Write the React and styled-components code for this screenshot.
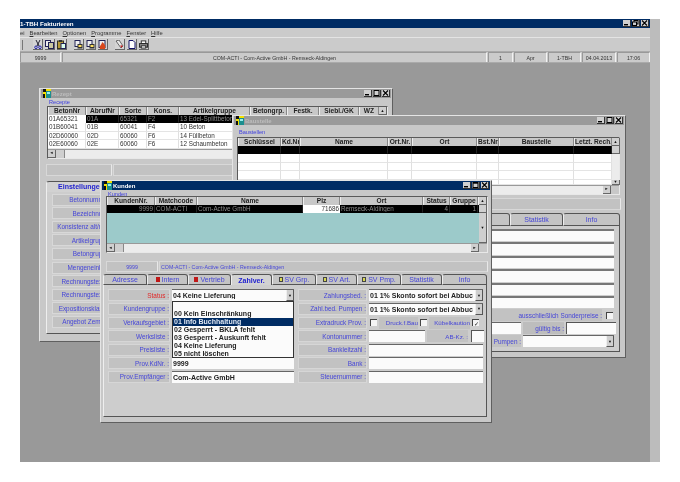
import React from 'react';
import styled, { createGlobalStyle } from 'styled-components';

const GlobalStyle = createGlobalStyle`
  html, body {
    margin: 0;
    background: #fff;
    font-family: "Liberation Sans", Arial, sans-serif;
    font-size: 8px;
  }
`;

const WindowIcon = () => (
  <IconSvg viewBox="0 0 8 9">
    <rect width="8" height="9" fill="#f4e000" />
    <rect x="0" y="0" width="3" height="3" fill="#111" />
    <rect x="3" y="2" width="5" height="7" fill="#1c8f8f" />
    <rect x="4" y="3" width="3" height="2" fill="#9ee" />
    <rect x="0" y="5" width="2" height="4" fill="#111" />
  </IconSvg>
);

const CaptionButtons = ({ active }) => (
  <Caption>
    <CaptionButton>
      <svg viewBox="0 0 7 6" width="7" height="6"><rect x="1" y="4" width="4" height="1.4" fill="#000" /></svg>
    </CaptionButton>
    <CaptionButton>
      <svg viewBox="0 0 7 6" width="7" height="6">
        <rect x="1" y="0.5" width="5" height="5" fill="none" stroke="#000" />
        {active && <rect x="1" y="0.5" width="5" height="1.2" fill="#000" />}
      </svg>
    </CaptionButton>
    <CaptionButton>
      <svg viewBox="0 0 7 6" width="7" height="6"><path d="M1 0.5 L6 5.5 M6 0.5 L1 5.5" stroke="#000" strokeWidth="1.1" /></svg>
    </CaptionButton>
  </Caption>
);

const ToolIcon = ({ kind }) => {
  if (kind === 'cut') {
    return (
      <svg viewBox="0 0 8 9" width="8" height="9">
        <path d="M2 0 L5 6 M6 0 L3 6" stroke="#223" strokeWidth="1" fill="none" />
        <circle cx="2" cy="7.3" r="1.3" fill="none" stroke="#22a" />
        <circle cx="6" cy="7.3" r="1.3" fill="none" stroke="#22a" />
      </svg>
    );
  }
  if (kind === 'copy') {
    return (
      <svg viewBox="0 0 9 9" width="9" height="9">
        <rect x="0.5" y="0.5" width="5" height="6" fill="#eee" stroke="#225" />
        <rect x="3.5" y="2.5" width="5" height="6" fill="#c9c8a0" stroke="#225" />
      </svg>
    );
  }
  if (kind === 'paste') {
    return (
      <svg viewBox="0 0 9 9" width="9" height="9">
        <rect x="0.5" y="1" width="6" height="7.5" fill="#b59a3a" stroke="#332" />
        <rect x="2" y="0" width="3" height="2" fill="#333" />
        <rect x="4" y="3.5" width="4.5" height="5" fill="#dfe" stroke="#225" />
      </svg>
    );
  }
  if (kind === 'find') {
    return (
      <svg viewBox="0 0 9 9" width="9" height="9">
        <rect x="1" y="0.5" width="5" height="6" fill="#eee" stroke="#225" />
        <rect x="3.5" y="4" width="5" height="4.5" fill="#333" />
        <rect x="4.5" y="5" width="3" height="2" fill="#ffe060" />
      </svg>
    );
  }
  if (kind === 'fire') {
    return (
      <svg viewBox="0 0 9 9" width="9" height="9">
        <rect x="1" y="0.5" width="6" height="7" fill="#eee" stroke="#225" />
        <path d="M2 9 C1 5 4 5 4 2 C7 4 8 6 7 9 Z" fill="#d9481c" />
      </svg>
    );
  }
  if (kind === 'torch') {
    return (
      <svg viewBox="0 0 9 9" width="9" height="9">
        <path d="M1 1 L4 0 L8 6 L6 8 Z" fill="#e8e8e8" stroke="#333" strokeWidth="0.7" />
        <path d="M5.5 5 L8 6 L6 8 Z" fill="#c22" />
      </svg>
    );
  }
  if (kind === 'page') {
    return (
      <svg viewBox="0 0 8 9" width="8" height="9">
        <path d="M1 0.5 H5 L7 2.5 V8.5 H1 Z" fill="#fff" stroke="#116" />
      </svg>
    );
  }
  return (
    <svg viewBox="0 0 10 9" width="10" height="9">
      <rect x="2.5" y="0.5" width="5" height="3" fill="#fff" stroke="#222" />
      <rect x="0.5" y="3.5" width="9" height="4" fill="#888" stroke="#222" />
      <rect x="2.5" y="6" width="5" height="2.5" fill="#fff" stroke="#222" />
    </svg>
  );
};

const ReceptCols = '38px 33px 28px 32px 71px 37px 32px 40px 20px 9px';
const BaustelleCols = '43px 19px 88px 24px 65px 22px 75px 38px 7px';
const KundenCols = '48px 42px 106px 37px 83px 27px 28px 1px 8px';

const receptHead = ['BetonNr', 'AbrufNr', 'Sorte', 'Kons.', 'Artikelgruppe', 'Betongrp.', 'Festk.', 'Siebl./GK', 'WZ'];
const receptRows = [
  ['01B60041', '01B', '60041', 'F4', '10 Beton'],
  ['02D60060', '02D', '60060', 'F6', '14 Füllbeton'],
  ['02E60060', '02E', '60060', 'F6', '12 Schaumbeton'],
];
const baustelleHead = ['Schlüssel', 'Kd.Nr.', 'Name', 'Ort.Nr.', 'Ort', 'Bst.Nr.', 'Baustelle', 'Letzt. Rech.'];
const kundenHead = ['KundenNr.', 'Matchcode', 'Name', 'Plz', 'Ort', 'Status', 'Gruppe', 'G'];
const statusOptions = [
  '00 Kein Einschränkung',
  '01 Info Buchhaltung',
  '02 Gesperrt - BKLA fehlt',
  '03 Gesperrt - Auskunft fehlt',
  '04 Keine Lieferung',
  '05 nicht löschen',
];
const leftLabels = ['Betonnummer', 'Bezeichnung', 'Konsistenz alt/neu', 'Artikelgruppe', 'Betongruppe', 'Mengeneinheit', 'Rechnungstext 1', 'Rechnungstext 2', 'Expositionsklasse', 'Angebot Zement'];
const kundenTabs = [
  { name: 'Adresse', w: 44 },
  { name: 'Intern', w: 41, mark: 'red' },
  { name: 'Vertrieb', w: 43, mark: 'red' },
  { name: 'Zahlver.', w: 41, active: true },
  { name: 'SV Grp.', w: 44, mark: 'doc' },
  { name: 'SV Art.', w: 41, mark: 'doc' },
  { name: 'SV Pmp.', w: 44, mark: 'doc' },
  { name: 'Statistik', w: 41 },
  { name: 'Info', w: 45 },
];

const HeaderRow = ({ cols, names }) => (
  <GridRow $cols={cols}>
    {names.map((n) => (
      <HeadCell key={n}>{n}</HeadCell>
    ))}
    <ArrowBox>▲</ArrowBox>
  </GridRow>
);

const HScroll = () => (
  <HBar>
    <ArrowBox>◄</ArrowBox>
    <Thumb />
    <Track />
    <ArrowBox>►</ArrowBox>
    <Corner />
  </HBar>
);

const Field = ({ label, red, w, children }) => (
  <FormRow>
    <FieldLabel $red={red} $w={w}>{label} :</FieldLabel>
    {children}
  </FormRow>
);

const SelectBox = ({ value }) => (
  <Select>
    <span>{value}</span>
    <SelectArrow>▼</SelectArrow>
  </Select>
);

const App = () => (
  <Page>
    <GlobalStyle />
    <AppFrame>
      <MainTitle>
        <span>1-TBH Fakturieren</span>
        <Caption>
          <CaptionButton>
            <svg viewBox="0 0 7 6" width="7" height="6"><rect x="1" y="4" width="4" height="1.4" fill="#000" /></svg>
          </CaptionButton>
          <CaptionButton>
            <svg viewBox="0 0 7 6" width="7" height="6"><rect x="2" y="0.5" width="4" height="3.5" fill="none" stroke="#000" /><rect x="0.5" y="2" width="4" height="3.5" fill="#ccc" stroke="#000" /></svg>
          </CaptionButton>
          <CaptionButton>
            <svg viewBox="0 0 7 6" width="7" height="6"><path d="M1 0.5 L6 5.5 M6 0.5 L1 5.5" stroke="#000" strokeWidth="1.1" /></svg>
          </CaptionButton>
        </Caption>
      </MainTitle>
      <MenuBar>
        <MenuItem>ei</MenuItem>
        <MenuItem><u>B</u>earbeiten</MenuItem>
        <MenuItem><u>O</u>ptionen</MenuItem>
        <MenuItem><u>P</u>rogramme</MenuItem>
        <MenuItem><u>F</u>enster</MenuItem>
        <MenuItem><u>H</u>ilfe</MenuItem>
      </MenuBar>
      <ToolBar>
        <Grip />
        <ToolGroup>
          {['cut', 'copy', 'paste'].map((k) => <ToolButton key={k}><ToolIcon kind={k} /></ToolButton>)}
        </ToolGroup>
        <ToolGroup>
          {['find', 'find', 'fire'].map((k, i) => <ToolButton key={i}><ToolIcon kind={k} /></ToolButton>)}
        </ToolGroup>
        <ToolGroup>
          {['torch', 'page', 'print'].map((k) => <ToolButton key={k}><ToolIcon kind={k} /></ToolButton>)}
        </ToolGroup>
      </ToolBar>
      <StatusStrip>
        <StatusCell $w={41}>9999</StatusCell>
        <StatusCell $grow>COM-ACTI - Com-Active GmbH - Remseck-Aldingen</StatusCell>
        <StatusCell $w={25}>1</StatusCell>
        <StatusCell $w={33}>Apr</StatusCell>
        <StatusCell $w={33}>1-TBH</StatusCell>
        <StatusCell $w={34}>04.04.2013</StatusCell>
        <StatusCell $w={33}>17:06</StatusCell>
      </StatusStrip>

      <Workspace>
        <Window $x={19} $y={25} $w={354} $h={254}>
          <WinTitle>
            <TitleLeft><WindowIcon />Rezept</TitleLeft>
            <CaptionButtons />
          </WinTitle>
          <Group $mt={7} $ml={6} $mr={3}>
            <GroupLabel $top={-6}>Recepte</GroupLabel>
            <Grid>
              <HeaderRow cols={ReceptCols} names={receptHead} />
              <GridRow $cols={ReceptCols} $selected>
                <FocusCell>01A65321</FocusCell>
                <Cell $dark>01A</Cell>
                <Cell $dark>65321</Cell>
                <Cell $dark>F2</Cell>
                <Cell $dark $wide={2}>13 Edel-Splittbeton</Cell>
              </GridRow>
              {receptRows.map((r) => (
                <GridRow key={r[0]} $cols={ReceptCols}>
                  {r.map((c) => <Cell key={c}>{c}</Cell>)}
                </GridRow>
              ))}
              <HScroll />
            </Grid>
          </Group>
          <InfoStrip $mt={5} $ml={5} $mr={3} $h={12}>
            <InfoBox $w={66} />
            <InfoBox $grow />
          </InfoStrip>
          <TabArea $mt={5} $ml={5} $mr={3} $mb={6}>
            <Tab $active $w={70} $h={11}>Einstellungen</Tab>
            <TabPanel>
              <LabelStack>
                {leftLabels.map((l) => <StackLabel key={l}>{l} :</StackLabel>)}
              </LabelStack>
            </TabPanel>
          </TabArea>
        </Window>

        <Window $x={212} $y={52} $w={394} $h={243}>
          <WinTitle>
            <TitleLeft><WindowIcon />Baustelle</TitleLeft>
            <CaptionButtons />
          </WinTitle>
          <Group $mt={11} $ml={3} $mr={4}>
            <GroupLabel $top={-7}>Baustellen</GroupLabel>
            <Grid>
              <HeaderRow cols={BaustelleCols} names={baustelleHead} />
              <GridRow $cols={BaustelleCols} $selected>
                {baustelleHead.map((h) => <Cell key={h} $dark />)}
                <ArrowBox />
              </GridRow>
              {[0, 1, 2].map((r) => (
                <GridRow key={r} $cols={BaustelleCols}>
                  {baustelleHead.map((h) => <Cell key={h} />)}
                  <ScrollSide />
                </GridRow>
              ))}
              <GridRow $cols={BaustelleCols} $h={5.4}>
                {baustelleHead.map((h) => <Cell key={h} />)}
                <ArrowBox>▼</ArrowBox>
              </GridRow>
              <HScroll />
            </Grid>
          </Group>
          <InfoStrip $mt={3} $ml={3} $mr={3} $h={12}><InfoBox $grow /></InfoStrip>
          <TabArea $mt={3} $ml={3} $mr={4} $mb={4}>
            <TabRow $end>
              <Tab $w={70} $h={13}>SV Pmp.</Tab>
              <Tab $w={53} $h={13}>Statistik</Tab>
              <Tab $w={57} $h={13}>Info</Tab>
            </TabRow>
            <BaustellePanel>
              {[0, 1, 2, 3, 4, 5].map((r) => <BlankLine key={r} />)}
              <SonderRow>
                <SonderLabel>ausschließlich Sonderpreise :</SonderLabel>
                <Check />
              </SonderRow>
              <DatesRow>
                <WideInput />
                <DateLabel>gültig bis :</DateLabel>
                <DateInput />
              </DatesRow>
              <PumpRow>
                <PumpLabel>Pumpen :</PumpLabel>
                <SelectBox value="" />
              </PumpRow>
            </BaustellePanel>
          </TabArea>
        </Window>

        <Window $x={80} $y={117} $w={392} $h={243}>
          <WinTitle $active>
            <TitleLeft><WindowIcon />Kunden</TitleLeft>
            <CaptionButtons active />
          </WinTitle>
          <Group $mt={5} $ml={4} $mr={2}>
            <GroupLabel $top={-4}>Kunden</GroupLabel>
            <Grid>
              <HeaderRow cols={KundenCols} names={kundenHead} />
              <GridRow $cols={KundenCols} $selected>
                <Cell $dark $right>9999</Cell>
                <Cell $dark>COM-ACTI</Cell>
                <Cell $dark>Com-Active GmbH</Cell>
                <FocusCell $right>71686</FocusCell>
                <Cell $dark>Remseck-Aldingen</Cell>
                <Cell $dark $right>4</Cell>
                <Cell $dark $right>1</Cell>
                <Cell $dark />
                <ArrowBox />
              </GridRow>
              <TealArea>
                <ScrollColumn>
                  <ScrollGap />
                  <ArrowBox>▼</ArrowBox>
                </ScrollColumn>
              </TealArea>
              <HScroll />
            </Grid>
          </Group>
          <InfoStrip $mt={8} $ml={4} $mr={2} $h={11}>
            <InfoBox $w={52} $blue>9999</InfoBox>
            <InfoBox $grow $blue $left>COM-ACTI - Com-Active GmbH - Remseck-Aldingen</InfoBox>
          </InfoStrip>
          <TabArea $mt={2} $ml={1} $mr={3} $mb={4}>
            <TabRow>
              {kundenTabs.map((t) => (
                <Tab key={t.name} $w={t.w} $h={11} $active={t.active}>
                  {t.mark === 'red' && <RedMark />}
                  {t.mark === 'doc' && <DocMark />}
                  {t.name}
                </Tab>
              ))}
            </TabRow>
            <KundenPanel>
              <FormColumn>
                <DropAnchor>
                  <Field label="Status" red w={62}>
                    <SelectBox value="04 Keine Lieferung" />
                  </Field>
                  <DropList>
                    <DropItem />
                    {statusOptions.map((o, i) => (
                      <DropItem key={o} $selected={i === 1}>{o}</DropItem>
                    ))}
                  </DropList>
                </DropAnchor>
                <Field label="Kundengruppe" w={62}><TextInput /></Field>
                <Field label="Verkaufsgebiet" w={62}><TextInput /></Field>
                <Field label="Werksliste" w={62}><TextInput /></Field>
                <Field label="Preisliste" w={62}><TextInput /></Field>
                <Field label="Prov.KdNr." w={62}><TextInput>9999</TextInput></Field>
                <Field label="Prov.Empfänger" w={62}><TextInput>Com-Active GmbH</TextInput></Field>
              </FormColumn>
              <FormColumn>
                <Field label="Zahlungsbed." w={69}><SelectBox value="01 1% Skonto sofort bei Abbuc" /></Field>
                <Field label="Zahl.bed. Pumpen" w={69}><SelectBox value="01 1% Skonto sofort bei Abbuc" /></Field>
                <Field label="Extradruck Prov." w={69}>
                  <CheckRow>
                    <Check />
                    <MiniLabel $w={39}>Druck.f.Bau</MiniLabel>
                    <Check />
                    <MiniLabel $w={41}>Kübelkaution</MiniLabel>
                    <Check $checked>✓</Check>
                  </CheckRow>
                </Field>
                <Field label="Kontonummer" w={69}>
                  <CheckRow>
                    <ShortInput />
                    <MiniLabel $w={41}>AB-Kz. :</MiniLabel>
                    <TinyInput />
                  </CheckRow>
                </Field>
                <Field label="Bankleitzahl" w={69}><TextInput /></Field>
                <Field label="Bank" w={69}><TextInput /></Field>
                <Field label="Steuernummer" w={69}><TextInput /></Field>
              </FormColumn>
            </KundenPanel>
          </TabArea>
        </Window>
      </Workspace>
    </AppFrame>
  </Page>
);

export default App;

const Page = styled.div`
  width: 680px;
  height: 482px;
  padding: 19px 0 0 20px;
  box-sizing: border-box;
  overflow: hidden;
  background: #fff;
`;

const AppFrame = styled.div`
  width: 640px;
  height: 443px;
  box-sizing: border-box;
  border-right: 10px solid #bcbcbc;
  display: flex;
  flex-direction: column;
  background: #cbcbcb;
  color: #222;
  filter: blur(0.3px);
`;

const MainTitle = styled.div`
  height: 9px;
  flex: none;
  display: flex;
  align-items: center;
  justify-content: space-between;
  padding-right: 1px;
  background: #002c64;
  color: #fff;
  font-size: 6.2px;
  font-weight: 700;
`;

const Caption = styled.div`
  display: flex;
  gap: 1px;
  align-items: center;
`;

const CaptionButton = styled.div`
  width: 7px;
  height: 6px;
  display: flex;
  background: #d0d0d0;
  border-right: 1px solid #333;
  border-bottom: 1px solid #333;
  overflow: hidden;
`;

const MenuBar = styled.div`
  height: 10px;
  flex: none;
  box-sizing: border-box;
  display: flex;
  align-items: center;
  gap: 5px;
  color: #333;
  font-size: 5.8px;
  border-bottom: 1px solid #e4e4e4;
`;

const MenuItem = styled.span`
  u { text-decoration: underline; }
`;

const ToolBar = styled.div`
  height: 14px;
  flex: none;
  box-sizing: border-box;
  display: flex;
  align-items: center;
  gap: 7px;
  border-bottom: 1px solid #aaa;
`;

const Grip = styled.div`
  width: 2px;
  height: 10px;
  border-right: 1px solid #777;
  margin-right: 3px;
`;

const ToolGroup = styled.div`
  display: flex;
  gap: 2px;
`;

const ToolButton = styled.div`
  width: 9px;
  height: 10px;
  display: flex;
  align-items: center;
  justify-content: center;
  border-right: 1px solid #666;
  border-bottom: 1px solid #666;
  background: #d4d4d4;
`;

const StatusStrip = styled.div`
  height: 11px;
  flex: none;
  display: flex;
  gap: 1px;
  border-bottom: 1px solid #aaa;
  box-sizing: border-box;
`;

const StatusCell = styled.div`
  flex: ${(p) => (p.$grow ? '1' : 'none')};
  width: ${(p) => (p.$w ? `${p.$w}px` : 'auto')};
  box-sizing: border-box;
  display: flex;
  align-items: center;
  justify-content: center;
  color: #333;
  font-size: 5.25px;
  border-top: 1px solid #999;
  border-right: 1px solid #f2f2f2;
  border-left: 1px solid #999;
`;

const Workspace = styled.div`
  flex: 1;
  position: relative;
  background: #999;
`;

const Window = styled.div`
  position: absolute;
  left: ${(p) => p.$x}px;
  top: ${(p) => p.$y}px;
  width: ${(p) => p.$w}px;
  height: ${(p) => p.$h}px;
  box-sizing: border-box;
  overflow: hidden;
  display: flex;
  flex-direction: column;
  padding: 0 1px 1px;
  background: #c8c8c8;
  border-top: 1px solid #e4e4e4;
  border-left: 1px solid #e4e4e4;
  border-right: 1px solid #5f5f5f;
  border-bottom: 1px solid #5f5f5f;
`;

const WinTitle = styled.div`
  height: 9px;
  flex: none;
  display: flex;
  align-items: center;
  justify-content: space-between;
  padding: 0 1px 0 2px;
  background: ${(p) => (p.$active ? '#002c64' : '#9a9a9a')};
  color: ${(p) => (p.$active ? '#fff' : '#bdbdbd')};
  font-size: 6px;
  font-weight: 700;
`;

const TitleLeft = styled.div`
  display: flex;
  align-items: center;
  gap: 1px;
`;

const IconSvg = styled.svg`
  width: 8px;
  height: 9px;
`;

const Group = styled.div`
  position: relative;
  flex: none;
  margin: ${(p) => p.$mt}px ${(p) => p.$mr}px 0 ${(p) => p.$ml}px;
`;

const GroupLabel = styled.span`
  position: absolute;
  left: 2px;
  top: ${(p) => p.$top}px;
  color: #3c3ce0;
  font-size: 5.6px;
  line-height: 6px;
`;

const Grid = styled.div`
  margin-top: 1px;
  border-top: 1px solid #5a5a5a;
  border-left: 1px solid #5a5a5a;
  border-right: 1px solid #e8e8e8;
  border-bottom: 1px solid #e8e8e8;
  background: #fff;
`;

const GridRow = styled.div`
  display: grid;
  grid-template-columns: ${(p) => p.$cols};
  height: ${(p) => p.$h || 8.4}px;
  background: ${(p) => (p.$selected ? '#000' : '#fff')};
  &:first-child { height: 8px; }
`;

const HeadCell = styled.div`
  background: #c8c8c8;
  color: #222;
  font-size: 6.6px;
  font-weight: 700;
  line-height: 8px;
  text-align: center;
  white-space: nowrap;
  overflow: hidden;
  border-right: 1px solid #888;
  border-left: 1px solid #eee;
  box-sizing: border-box;
`;

const Cell = styled.div`
  box-sizing: border-box;
  padding: 0 1px;
  font-size: 6.3px;
  line-height: 8px;
  white-space: nowrap;
  overflow: hidden;
  text-align: ${(p) => (p.$right ? 'right' : 'left')};
  color: ${(p) => (p.$dark ? '#8c8c8c' : '#333')};
  background: ${(p) => (p.$dark ? '#000' : '#fff')};
  border-right: 1px solid ${(p) => (p.$dark ? '#222' : '#e0e0e0')};
  border-bottom: 1px solid ${(p) => (p.$dark ? '#000' : '#e4e4e4')};
  grid-column: span ${(p) => p.$wide || 1};
`;

const FocusCell = styled(Cell)`
  background: #fff;
  color: #333;
  border: none;
`;

const ArrowBox = styled.div`
  flex: none;
  width: 8px;
  height: 100%;
  box-sizing: border-box;
  display: flex;
  align-items: center;
  justify-content: center;
  background: #cfcfcf;
  color: #111;
  font-size: 4px;
  line-height: 1;
  border-right: 1px solid #666;
  border-bottom: 1px solid #666;
`;

const ScrollSide = styled.div`
  background: #ececec;
`;

const HBar = styled.div`
  height: 8px;
  display: flex;
  background: #ececec;
  border-top: 1px solid #999;
`;

const Thumb = styled.div`
  width: 8px;
  background: #cfcfcf;
  border-right: 1px solid #888;
`;

const Track = styled.div`
  flex: 1;
`;

const Corner = styled.div`
  width: 8px;
  background: #c8c8c8;
`;

const InfoStrip = styled.div`
  flex: none;
  display: flex;
  gap: 1px;
  height: ${(p) => p.$h}px;
  margin: ${(p) => p.$mt}px ${(p) => p.$mr}px 0 ${(p) => p.$ml}px;
`;

const InfoBox = styled.div`
  flex: ${(p) => (p.$grow ? '1' : 'none')};
  width: ${(p) => (p.$w ? `${p.$w}px` : 'auto')};
  display: flex;
  align-items: center;
  justify-content: ${(p) => (p.$left ? 'flex-start' : 'center')};
  padding-left: ${(p) => (p.$left ? '1px' : '0')};
  box-sizing: border-box;
  background: #c2c2c2;
  color: #4646d8;
  font-size: 5.25px;
  border: 1px solid #d8d8d8;
  border-right-color: #e8e8e8;
`;

const TabArea = styled.div`
  flex: 1;
  min-height: 0;
  display: flex;
  flex-direction: column;
  margin: ${(p) => p.$mt}px ${(p) => p.$mr}px ${(p) => p.$mb}px ${(p) => p.$ml}px;
`;

const TabRow = styled.div`
  flex: none;
  display: flex;
  justify-content: ${(p) => (p.$end ? 'flex-end' : 'flex-start')};
`;

const Tab = styled.div`
  width: ${(p) => p.$w}px;
  flex: none;
  box-sizing: border-box;
  height: ${(p) => p.$h}px;
  display: flex;
  align-items: center;
  justify-content: center;
  gap: 1px;
  color: ${(p) => (p.$active ? '#2222d0' : '#4646d8')};
  font-size: 7px;
  font-weight: ${(p) => (p.$active ? 700 : 400)};
  background: ${(p) => (p.$active ? '#d2d2d2' : '#c4c4c4')};
  border: 1px solid #555;
  border-bottom: ${(p) => (p.$active ? 'none' : '1px solid #555')};
  border-left-color: #eee;
  border-top-left-radius: 3px;
  border-top-right-radius: 3px;
  white-space: nowrap;
  overflow: hidden;
`;

const RedMark = styled.i`
  width: 4px;
  height: 5px;
  margin-right: 1px;
  background: #c01818;
`;

const DocMark = styled.i`
  width: 4px;
  height: 5px;
  margin-right: 1px;
  background: #d8d850;
  border: 1px solid #444;
  box-sizing: border-box;
`;

const TabPanel = styled.div`
  flex: 1;
  min-height: 0;
  box-sizing: border-box;
  padding: 2px 5px 3px 5px;
  border-left: 1px solid #eee;
  border-right: 1px solid #555;
  border-bottom: 1px solid #555;
  background: #cdcdcd;
  display: flex;
  flex-direction: column;
  gap: 1px;
`;

const BaustellePanel = styled(TabPanel)`
  padding-top: 3px;
`;

const KundenPanel = styled(TabPanel)`
  display: grid;
  grid-template-columns: 186px 185px;
  align-content: start;
  gap: 4px;
  padding: 4px 3px 3px 4px;
`;

const LabelStack = styled.div`
  display: flex;
  flex-direction: column;
  gap: 1.6px;
`;

const StackLabel = styled.div`
  height: 12px;
  width: 62px;
  box-sizing: border-box;
  display: flex;
  align-items: center;
  justify-content: flex-end;
  background: #c2c2c2;
  color: #4646d8;
  font-size: 6.4px;
  white-space: nowrap;
  border: 1px solid #d8d8d8;
`;

const BlankLine = styled.div`
  height: 12.4px;
  margin-left: 200px;
  box-sizing: border-box;
  background: #fbfbfb;
  border-top: 2px solid #777;
`;

const SonderRow = styled.div`
  display: flex;
  align-items: center;
  gap: 3px;
  height: 12px;
  margin-left: 200px;
`;

const SonderLabel = styled.div`
  flex: 1;
  height: 100%;
  display: flex;
  align-items: center;
  justify-content: flex-end;
  color: #4646d8;
  font-size: 6.4px;
  background: #c2c2c2;
`;

const DatesRow = styled.div`
  display: flex;
  height: 12px;
  gap: 2px;
  margin-left: 200px;
  margin-right: -2px;
`;

const WideInput = styled.div`
  flex: 1;
  background: #fbfbfb;
  border-top: 1px solid #666;
`;

const DateLabel = styled.div`
  width: 41px;
  display: flex;
  align-items: center;
  justify-content: flex-end;
  background: #bdbdbd;
  color: #4646d8;
  font-size: 6.4px;
`;

const DateInput = styled.div`
  width: 50px;
  box-sizing: border-box;
  background: #fbfbfb;
  border-top: 1px solid #555;
  border-left: 1px solid #555;
`;

const PumpRow = styled.div`
  display: flex;
  height: 12px;
  gap: 2px;
  margin-left: 200px;
`;

const PumpLabel = styled.div`
  width: 78px;
  flex: none;
  display: flex;
  align-items: center;
  justify-content: flex-end;
  color: #4646d8;
  font-size: 6.4px;
  background: #c2c2c2;
`;

const FormColumn = styled.div`
  display: flex;
  flex-direction: column;
  gap: 1.6px;
`;

const FormRow = styled.div`
  height: 12px;
  display: flex;
  gap: 2px;
`;

const FieldLabel = styled.div`
  width: ${(p) => p.$w}px;
  flex: none;
  box-sizing: border-box;
  display: flex;
  align-items: center;
  justify-content: flex-end;
  background: #c2c2c2;
  color: ${(p) => (p.$red ? '#e02828' : '#4646d8')};
  font-size: 6.4px;
  white-space: nowrap;
  border: 1px solid #d6d6d6;
`;

const TextInput = styled.div`
  flex: 1;
  min-width: 0;
  box-sizing: border-box;
  padding-left: 1px;
  display: flex;
  align-items: center;
  background: #fbfbfb;
  color: #222;
  font-size: 7px;
  font-weight: 700;
  border-top: 1px solid #666;
  white-space: nowrap;
`;

const Select = styled(TextInput)`
  justify-content: space-between;
  overflow: hidden;
  span { overflow: hidden; min-width: 0; }
`;

const SelectArrow = styled.div`
  flex: none;
  width: 8px;
  height: 100%;
  display: flex;
  align-items: center;
  justify-content: center;
  background: #cfcfcf;
  color: #111;
  font-size: 4px;
  border-left: 1px solid #eee;
  border-right: 1px solid #555;
  border-bottom: 1px solid #555;
  box-sizing: border-box;
`;

const DropAnchor = styled.div`
  position: relative;
`;

const DropList = styled.div`
  position: absolute;
  left: 64px;
  top: 12px;
  z-index: 5;
  width: 122px;
  height: 57px;
  box-sizing: border-box;
  overflow: hidden;
  background: #fbfbfb;
  border: 1px solid #333;
`;

const DropItem = styled.div`
  height: 8px;
  line-height: 8px;
  padding-left: 1px;
  font-size: 7px;
  font-weight: 700;
  white-space: nowrap;
  color: ${(p) => (p.$selected ? '#dfe8f4' : '#222')};
  background: ${(p) => (p.$selected ? '#002c64' : 'transparent')};
`;

const CheckRow = styled.div`
  flex: 1;
  display: flex;
  align-items: stretch;
  gap: 1px;
`;

const Check = styled.div`
  flex: none;
  width: 7px;
  height: 7px;
  align-self: center;
  margin: 0 1px;
  box-sizing: border-box;
  display: flex;
  align-items: center;
  justify-content: center;
  background: #f4f4f4;
  color: #111;
  font-size: 6px;
  border-top: 1px solid #444;
  border-left: 1px solid #444;
`;

const MiniLabel = styled.div`
  width: ${(p) => p.$w}px;
  flex: none;
  display: flex;
  align-items: center;
  justify-content: flex-end;
  background: #c2c2c2;
  color: #4646d8;
  font-size: 6.2px;
  white-space: nowrap;
  overflow: hidden;
`;

const ShortInput = styled.div`
  width: 56px;
  margin-right: 1px;
  background: #fbfbfb;
  border-top: 1px solid #666;
`;

const TinyInput = styled.div`
  width: 12px;
  margin-left: 2px;
  background: #fbfbfb;
  border-top: 1px solid #555;
  border-left: 1px solid #555;
`;

const TealArea = styled.div`
  height: 30px;
  display: flex;
  justify-content: flex-end;
  background: #9ccaca;
`;

const ScrollColumn = styled.div`
  width: 8px;
  display: flex;
  flex-direction: column;
  background: #ececec;
`;

const ScrollGap = styled.div`
  flex: 1;
`;
